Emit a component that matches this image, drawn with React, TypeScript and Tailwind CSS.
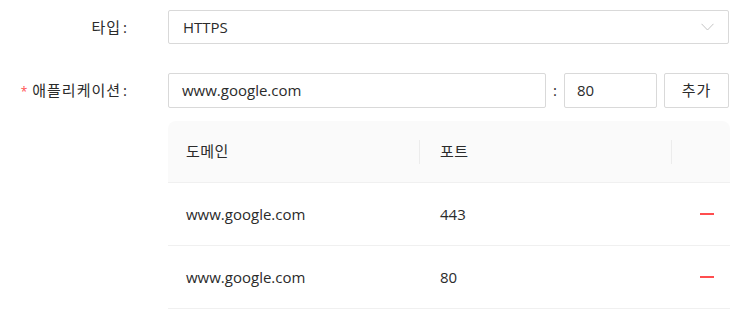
import React from "react";

const rows = [
  { domain: "www.google.com", port: "443" },
  { domain: "www.google.com", port: "80" },
];

export default function App() {
  return (
    <div
      className="h-[330px] w-[753px] bg-white text-[15px] text-[#2b2b2b]"
      style={{ fontFamily: '"Open Sans", "Noto Sans CJK KR", sans-serif' }}
    >
      <div className="pt-[10px]">
        {/* type */}
        <div className="flex items-center">
          <label className="w-[168px] shrink-0 pr-[41px] text-right">
            <span className="tracking-[1px]">타입</span>
            <span className="ml-[2px]">:</span>
          </label>
          <div className="flex h-[34px] w-[561px] items-center justify-between rounded-[2px] border border-[#d9d9d9] pl-[14px] pr-[14px]">
            <span>HTTPS</span>
            <svg width="13" height="8" viewBox="0 0 13 8" fill="none">
              <path d="M0.5 0.8 L6.5 7 L12.5 0.8" stroke="#c4c4c4" strokeWidth="1" />
            </svg>
          </div>
        </div>

        {/* application */}
        <div className="mt-[29px] flex items-center">
          <label className="w-[168px] shrink-0 pr-[41px] text-right">
            <span className="mr-[5px] text-[12px] text-[#ff4d4f]">*</span>
            <span className="tracking-[1px]">애플리케이션</span>
            <span className="ml-[2px]">:</span>
          </label>
          <div className="flex h-[35px] w-[378px] items-center rounded-[2px] border border-[#d9d9d9] px-[13px]">
            www.google.com
          </div>
          <span className="w-[18px] text-center">:</span>
          <div className="flex h-[35px] w-[93px] items-center rounded-[2px] border border-[#d9d9d9] px-[12px]">
            80
          </div>
          <button className="ml-[7px] flex h-[35px] w-[65px] items-center justify-center rounded-[2px] border border-[#d9d9d9] bg-white tracking-[1px]">
            추가
          </button>
        </div>

        {/* table */}
        <div className="ml-[168px] mt-[13px] w-[562px]">
          <div className="flex h-[62px] items-center rounded-t-[8px] border-b border-[#f0f0f0] bg-[#fafafa]">
            <div className="relative w-[252px] px-[18px] tracking-[0.5px]">
              도메인
              <span className="absolute right-0 top-1/2 h-[24px] w-px -translate-y-1/2 bg-[#ececec]" />
            </div>
            <div className="relative w-[252px] px-[20px] tracking-[0.5px]">
              포트
              <span className="absolute right-0 top-1/2 h-[24px] w-px -translate-y-1/2 bg-[#ececec]" />
            </div>
            <div className="flex-1" />
          </div>
          {rows.map((r, i) => (
            <div key={i} className="flex h-[63px] items-center border-b border-[#f0f0f0]">
              <div className="w-[252px] px-[18px]">{r.domain}</div>
              <div className="w-[252px] px-[20px]">{r.port}</div>
              <div className="flex flex-1 items-center justify-end pr-[16px]">
                <span className="block h-[2px] w-[14px] bg-[#ff4d4f]" />
              </div>
            </div>
          ))}
        </div>
      </div>
    </div>
  );
}
